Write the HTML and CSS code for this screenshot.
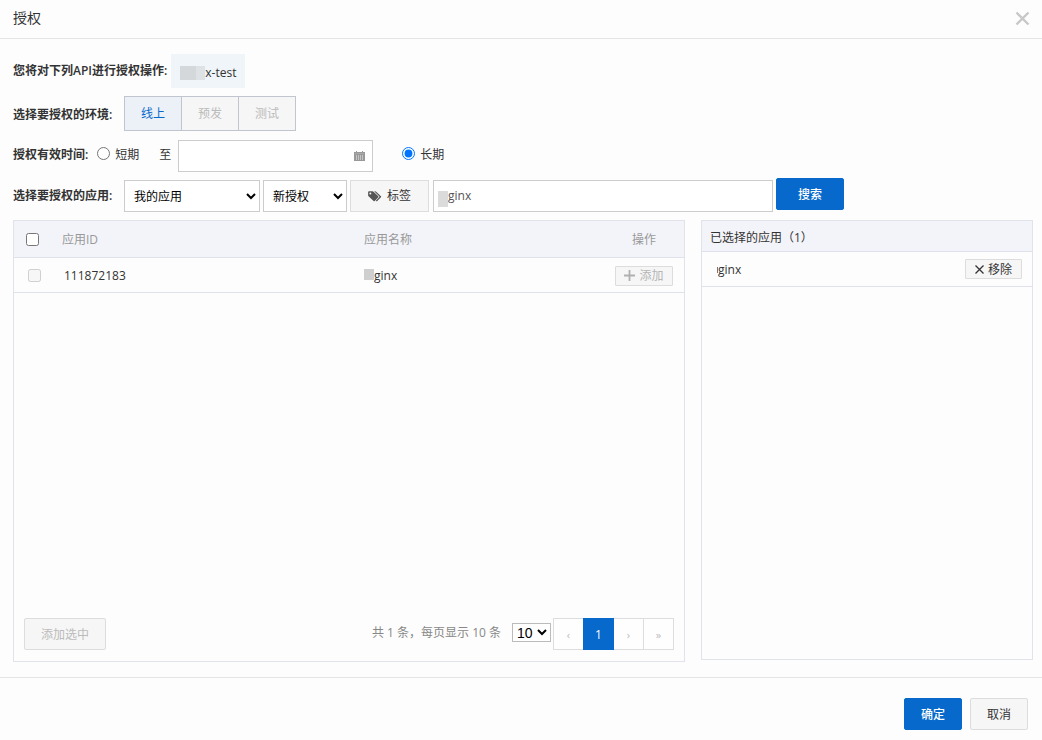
FILE: index.html
```html
<!DOCTYPE html>
<html lang="zh-CN">
<head>
<meta charset="utf-8">
<title>授权</title>
<link rel="stylesheet" href="styles.css">
</head>
<body>
<div class="dialog" role="dialog" aria-labelledby="dialog-title">
  <header class="dialog-header">
    <h1 class="dialog-title" id="dialog-title">授权</h1>
    <button class="close" type="button" aria-label="关闭">
      <svg width="15" height="15" viewBox="0 0 15 15"><path d="M1.5 1.5l12 12M13.5 1.5l-12 12" fill="none" stroke="#c8c8c8" stroke-width="2.4"/></svg>
    </button>
  </header>

  <main class="dialog-body">
    <div class="row row-api">
      <span class="label">您将对下列API进行授权操作:</span>
      <span class="api-tag"><span class="mask mask-wide"></span>x-test</span>
    </div>

    <div class="row row-env">
      <span class="label label-col">选择要授权的环境:</span>
      <div class="segmented">
        <button class="segment segment-active" type="button">线上</button>
        <button class="segment" type="button" disabled>预发</button>
        <button class="segment" type="button" disabled>测试</button>
      </div>
    </div>

    <div class="row row-time">
      <span class="label">授权有效时间:</span>
      <input class="radio" type="radio" name="period" id="short">
      <label for="short">短期</label>
      <label class="until" for="date">至</label>
      <div class="date-box">
        <input class="date-input" type="text" id="date">
        <svg class="calendar" width="11" height="10" viewBox="0 0 11 10"><path d="M0 1h2V0h1v1h5V0h1v1h2v9H0z" fill="#999"/><path d="M2.5 4v5M4.5 4v5M6.5 4v5M8.5 4v5" stroke="#c4c4c4" stroke-width="1"/><path d="M1 2.5h9" stroke="#aaa"/></svg>
      </div>
      <input class="radio radio-long" type="radio" name="period" id="long" checked>
      <label for="long">长期</label>
    </div>

    <div class="row row-app">
      <label class="label label-col" for="scope">选择要授权的应用:</label>
      <div class="filters">
        <select class="select select-scope" id="scope"><option>我的应用</option></select>
        <select class="select select-state" aria-label="授权状态"><option>新授权</option></select>
        <button class="tag-button" type="button">
          <svg width="14" height="11" viewBox="0 0 15 12"><path fill="#555" fill-rule="evenodd" d="M0 1.2Q0 .3 1 .3H4.7Q5.5.3 6.2 1l4.9 4.7q.6.6 0 1.2L7.2 11q-.6.6-1.2 0L.7 6Q0 5.3 0 4.6zM2.4 1.5a1.1 1.1 0 1 0 0 2.2 1.1 1.1 0 0 0 0-2.2z"/><path fill="#555" d="M6.6.3h1q.8 0 1.5.7L14 5.7q.6.6 0 1.2L10 11q-.7.6-1.4 0l-.3-.3 3.8-3.8q.6-.6 0-1.2z"/></svg>
          标签
        </button>
        <div class="search-box">
          <span class="mask mask-search"></span>
          <input class="search-input" type="text" value="ginx" aria-label="应用名称">
        </div>
      </div>
      <button class="button primary search-button" type="button">搜索</button>
    </div>

    <div class="panels">
      <section class="panel panel-apps">
        <table class="apps">
          <thead>
            <tr>
              <th class="cell-check"><input class="check" type="checkbox" aria-label="全选"></th>
              <th class="cell-id">应用ID</th>
              <th class="cell-name">应用名称</th>
              <th class="cell-action">操作</th>
            </tr>
          </thead>
          <tbody>
            <tr>
              <td class="cell-check"><input class="check" type="checkbox" aria-label="选择 111872183" disabled></td>
              <td class="cell-id">111872183</td>
              <td class="cell-name"><span class="mask mask-cell"></span>ginx</td>
              <td class="cell-action">
                <button class="mini" type="button" disabled>
                  <svg width="11" height="11" viewBox="0 0 11 11"><path d="M5.5 0v11M0 5.5h11" stroke="#b0b0b0" stroke-width="1.8"/></svg>添加</button>
              </td>
            </tr>
          </tbody>
        </table>
        <div class="panel-footer">
          <button class="button add-selected" type="button" disabled>添加选中</button>
          <div class="paging">
            <label class="summary" for="size">共 1 条，每页显示 10 条</label>
            <select class="size" id="size"><option>10</option></select>
            <nav class="pager" aria-label="分页">
              <button class="page" type="button" disabled>‹</button>
              <button class="page page-current" type="button">1</button>
              <button class="page" type="button" disabled>›</button>
              <button class="page" type="button" disabled>»</button>
            </nav>
          </div>
        </div>
      </section>

      <section class="panel panel-selected">
        <h2 class="selected-title">已选择的应用（1）</h2>
        <div class="selected-item">
          <span class="selected-name"><span class="sliver"></span>ginx</span>
          <button class="mini mini-remove" type="button">
            <svg width="9" height="9" viewBox="0 0 9 9"><path d="M.5.5l8 8M8.5.5l-8 8" stroke="#333" stroke-width="1.3"/></svg>移除</button>
        </div>
      </section>
    </div>
  </main>

  <footer class="dialog-footer">
    <button class="button primary" type="button">确定</button>
    <button class="button" type="button">取消</button>
  </footer>
</div>
</body>
</html>
```
FILE: styles.css
```css
* { box-sizing: border-box; }

body {
  margin: 0;
  background: #fdfdfd;
  color: #333;
  font: 12px/18px "Open Sans", "Noto Sans CJK SC", sans-serif;
}

button, input, select { font: inherit; color: inherit; margin: 0; }
button { padding: 0; display: inline-flex; align-items: center; justify-content: center; }
svg { flex: none; }

.dialog { display: flex; flex-direction: column; min-height: 100vh; }

.dialog-header {
  display: flex;
  align-items: center;
  justify-content: space-between;
  height: 39px;
  padding: 0 12px 2px 13px;
  border-bottom: 1px solid #e5e5e5;
}
.dialog-title { margin: 0; font-size: 14px; font-weight: 400; line-height: 20px; }
.close { border: 0; background: none; }

.dialog-body { flex: 1; display: flex; flex-direction: column; padding: 15px 9px 15px 13px; }

.row { display: flex; align-items: center; }
.label { font-weight: 600; white-space: nowrap; }
.label-col { width: 111px; flex: none; }

.row-api { gap: 4px; height: 34px; }
.api-tag {
  display: flex;
  align-items: center;
  height: 34px;
  padding: 4px 9px 0;
  background: #eff5f8;
}
.mask { display: inline-block; background: #d6d7d8; }
.mask-wide { width: 25px; height: 14px; background: linear-gradient(to right, #d5d8da 16px, #dfe2e4 16px); }

.row-env { margin-top: 8px; height: 35px; }
.row-env .label { padding-top: 3px; }
.segmented { display: flex; }
.segment {
  width: 58px;
  height: 35px;
  border: 1px solid #c0c5cf;
  background: #f6f6f6;
  color: #bbb;
}
.segment + .segment { margin-left: -1px; }
.segment-active { background: #ecf1f7; color: #0669cb; }

.row-time { margin-top: 9px; height: 32px; }
.row-time .label, .row-time label { padding-bottom: 2px; }
.radio { width: 13px; height: 13px; margin: 0 5px 6px 9px; flex: none; }
.until { margin: 0 7px 0 20px; }
.date-box {
  display: flex;
  align-items: center;
  width: 195px;
  height: 32px;
  flex: none;
  padding: 0 7px 0 8px;
  border: 1px solid #ccc;
  background: #fff;
}
.date-input { flex: 1; min-width: 0; border: 0; background: none; outline: 0; }
.radio-long { margin-left: 29px; }

.row-app { margin-top: 6px; height: 34px; align-items: flex-start; gap: 0 3px; }
.row-app .label-col { width: 108px; padding-top: 9px; }
.filters { display: flex; flex: 0 1 649px; min-width: 0; gap: 3px; padding-top: 2px; }
.select { height: 32px; flex: none; padding: 0 4px 0 5px; border: 1px solid #ccc; border-radius: 0; background: #fff; color: #000; }
.select-scope { width: 136px; }
.select-state { width: 84px; }
.tag-button { width: 79px; height: 32px; flex: none; gap: 5px; border: 1px solid #ddd; background: #f6f6f6; }
.search-box {
  display: flex;
  align-items: center;
  flex: 1;
  min-width: 0;
  height: 32px;
  padding-left: 4px;
  margin-left: 1px;
  border: 1px solid #ccc;
  background: #fff;
}
.mask-search { width: 10px; height: 16px; margin-top: 6px; background: #dbdbdb; }
.search-input { flex: 1; min-width: 0; padding: 0; border: 0; background: none; color: #555; outline: 0; }

.button {
  min-width: 58px;
  height: 32px;
  padding-top: 2px;
  border: 1px solid #ddd;
  border-radius: 2px;
  background: #f6f6f6;
}
.button:disabled { color: #bbb; }
.primary { border-color: #0669cb; background: #0669cb; color: #fff; font-weight: 500; }
.search-button { width: 68px; flex: none; }

.panels { flex: 1; display: grid; grid-template-columns: 672fr 332fr; gap: 16px; margin-top: 8px; }
.panel { border: 1px solid #e0e3ea; min-width: 0; }
.panel-apps { display: flex; flex-direction: column; justify-content: space-between; }
.panel-selected { margin-bottom: 2px; }

.apps { width: 100%; border-collapse: separate; border-spacing: 0; table-layout: fixed; }
.apps th, .apps td { padding: 0; text-align: left; font-weight: 400; border-bottom: 1px solid #dfe2ea; }
.apps th { height: 37px; background: #f3f4f9; color: #999; padding-top: 1px; }
.apps td { height: 35px; padding-top: 1px; }
.apps .cell-check { width: 48px; padding-left: 12px; padding-top: 0; }
.apps td.cell-check { padding-left: 14px; }
.apps td.cell-id { padding-left: 2px; }
.apps .cell-id { width: 302px; }
.apps .cell-action { text-align: right; padding-right: 11px; }
.apps th.cell-action { padding-right: 28px; }
.check { display: block; width: 13px; height: 13px; }
.mask-cell { width: 10px; height: 11px; background: #cfcfcf; }

.mini {
  width: 58px;
  height: 20px;
  gap: 4px;
  border: 1px solid #ddd;
  border-radius: 1px;
  background: #f6f6f6;
  vertical-align: middle;
}
.mini:disabled { color: #b5b5b5; }

.panel-footer { display: flex; align-items: center; justify-content: space-between; padding: 0 10px 11px; }
.add-selected { width: 82px; }
.paging { display: flex; align-items: center; }
.summary { color: #888; margin: 0 11px 2px 0; }
.size {
  width: 39px;
  height: 19px;
  margin: 0 2px 3px 0;
  padding: 0;
  border: 1px solid #bbb;
  border-radius: 0;
  background: #fff;
  color: #000;
  font: 14px/16px "Liberation Sans", sans-serif;
}
.pager { display: flex; }
.page { width: 31px; height: 32px; padding-top: 2px; border: 1px solid #ddd; background: #fefefe; }
.page + .page { margin-left: -1px; }
.page:disabled { color: #bbb; font-size: 11px; }
.page-current { border-color: #0669cb; background: #0669cb; color: #fff; z-index: 1; }

.selected-title {
  margin: 0;
  height: 31px;
  padding: 0 8px;
  border-bottom: 1px solid #dfe2ea;
  background: #f3f4f9;
  font-size: 12px;
  font-weight: 400;
  line-height: 33px;
}
.selected-item {
  display: flex;
  align-items: center;
  justify-content: space-between;
  height: 35px;
  padding: 0 10px 0 15px;
  border-bottom: 1px solid #dfe2ea;
}
.selected-name { display: flex; align-items: center; padding-top: 2px; }
.sliver { width: 1px; height: 6px; background: #777; }
.mini-remove { width: 57px; padding-top: 1px; }

.dialog-footer {
  display: flex;
  justify-content: flex-end;
  gap: 8px;
  padding: 20px 14px 10px;
  border-top: 1px solid #e5e5e5;
}
```
